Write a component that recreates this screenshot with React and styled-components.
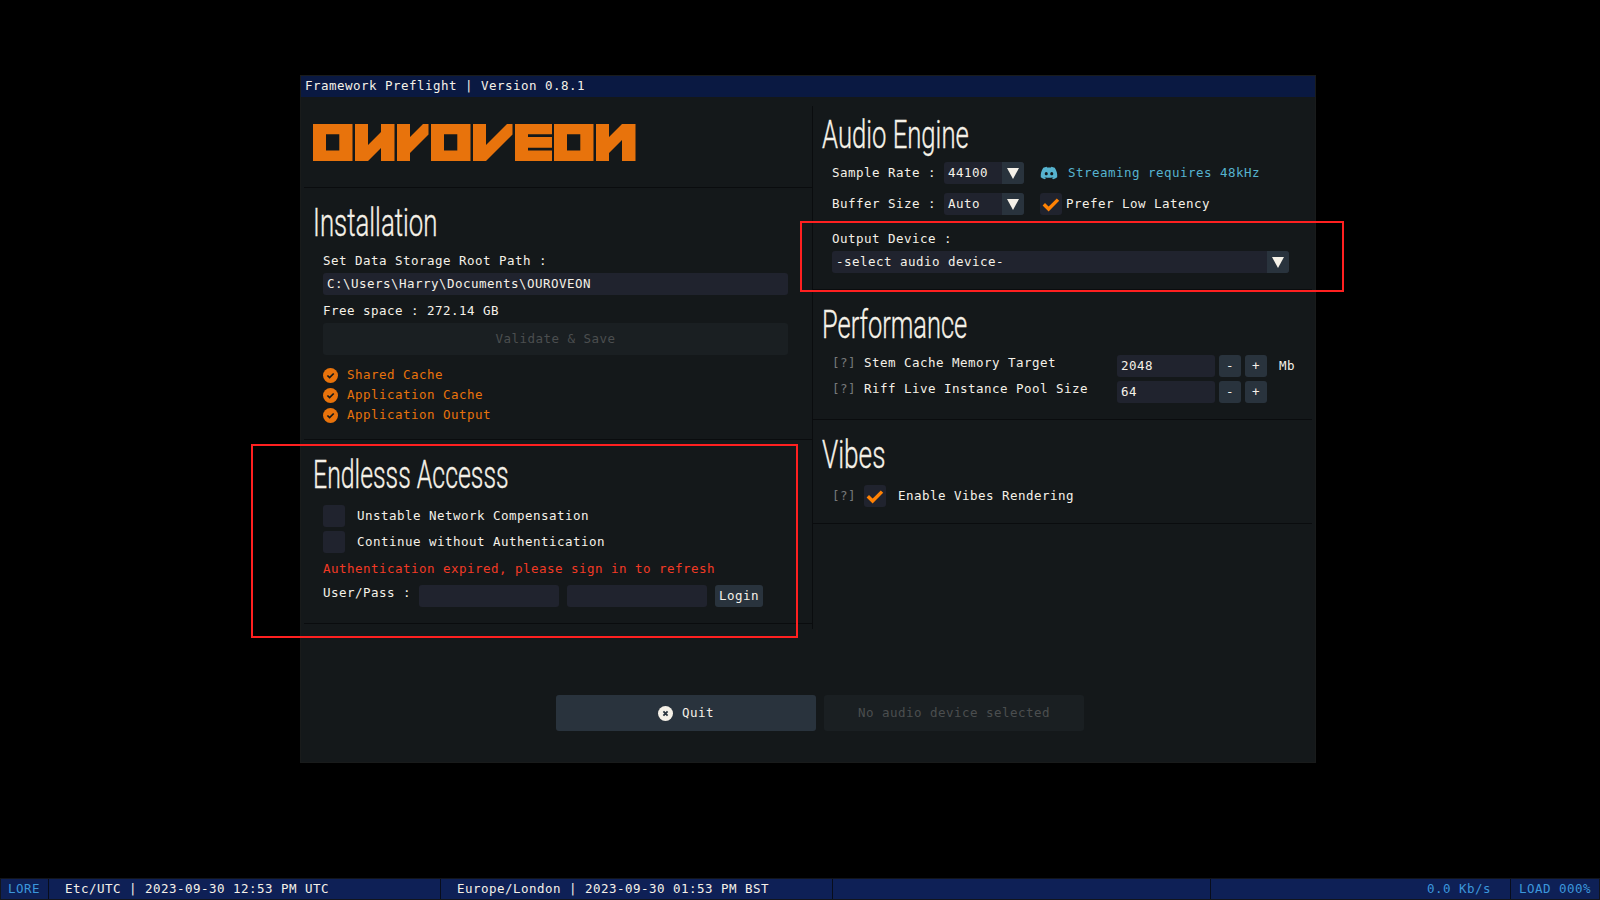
import React from "react";
import styled, { createGlobalStyle } from "styled-components";
import { FaDiscord } from "react-icons/fa";

const c = {
  panel: "#14181a",
  line: "#0a0c0e",
  title: "#0a1942",
  field: "#20232e",
  button: "#29333d",
  buttonOff: "#1a1f22",
  text: "#f5f1e8",
  dim: "#4b4e4f",
  hint: "#77787a",
  orange: "#e8730c",
  tick: "#ff8204",
  cyan: "#56b3cf",
  red: "#f23a25",
  blue: "#3c97dc",
};

const GlobalStyle = createGlobalStyle`
  * { box-sizing: border-box; }
  body { margin: 0; background: #000; overflow: hidden; }
`;

const Page = styled.div`
  position: relative;
  display: flex;
  flex-direction: column;
  width: 1600px;
  height: 900px;
  background: #000;
  color: ${c.text};
  font-family: "DejaVu Sans Mono", "Liberation Mono", monospace;
  font-size: 12.5px;
  letter-spacing: 0.475px;
  white-space: pre;
`;

const Panel = styled.main`
  display: flex;
  flex-direction: column;
  width: 1016px;
  height: 688px;
  margin: 75px 0 0 300px;
  background: ${c.panel};
  border: 1px solid #191b1b;
`;

const TitleBar = styled.header`
  height: 21px;
  padding-left: 4px;
  line-height: 20px;
  background: ${c.title};
`;

const Columns = styled.div`
  display: flex;
  height: 523px;
  margin: 9px 3px 0;
`;

const LeftColumn = styled.div`
  width: 509px;
  border-right: 1px solid ${c.line};
`;

const RightColumn = styled.div`
  width: 499px;
`;

const Section = styled.section`
  height: ${(p) => p.$height}px;
  padding: ${(p) => p.$top ?? 15}px 0 0 ${(p) => p.$left ?? 19}px;
  border-bottom: 1px solid ${c.line};
`;

const Heading = styled.h1`
  width: max-content;
  height: 40px;
  margin: 0 0 ${(p) => p.$gap ?? 10}px -10px;
  font: 300 39px/40px Roboto, sans-serif;
  letter-spacing: 0;
  -webkit-text-stroke: 0.35px ${c.text};
  transform: scaleX(${(p) => p.$squeeze});
  transform-origin: left center;
`;

const Line = styled.div`
  height: 20px;
  line-height: 20px;
  color: ${(p) => p.$color ?? "inherit"};
  margin-top: ${(p) => p.$gap ?? 0}px;
`;

const Row = styled.div`
  display: flex;
  align-items: center;
  height: 22px;
  line-height: 22px;
  margin-top: ${(p) => p.$gap ?? 0}px;
`;

const Label = styled.span`
  width: ${(p) => (p.$width ? `${p.$width}px` : "auto")};
  height: 22px;
  line-height: ${(p) => (p.$raised ? 22 - 2 * p.$raised : 22)}px;
  color: ${(p) => p.$color ?? "inherit"};
  margin-left: ${(p) => p.$indent ?? 0}px;
`;

const Field = styled.div`
  width: ${(p) => p.$width}px;
  height: 22px;
  margin: ${(p) => p.$gap ?? 0}px ${(p) => p.$after ?? 0}px 0 0;
  padding-left: 4px;
  line-height: 22px;
  background: ${c.field};
  border-radius: 3px;
`;

const ComboBox = styled.div`
  display: flex;
  justify-content: space-between;
  width: ${(p) => p.$width}px;
  height: 22px;
  margin-top: ${(p) => p.$gap ?? 0}px;
  padding-left: 4px;
  line-height: 22px;
  background: ${c.field};
  border-radius: 3px;
  overflow: hidden;
`;

const ComboArrow = styled.span`
  display: flex;
  align-items: center;
  justify-content: center;
  width: 22px;
  background: ${c.button};
`;

const Button = styled.button`
  display: flex;
  align-items: center;
  justify-content: center;
  width: ${(p) => p.$width}px;
  height: ${(p) => p.$height ?? 22}px;
  margin: ${(p) => p.$gap ?? 0}px ${(p) => p.$after ?? 0}px 0 0;
  padding: 0 0 ${(p) => (p.$height ? 2 : 0)}px;
  border: 0;
  border-radius: 3px;
  font: inherit;
  letter-spacing: inherit;
  color: ${(p) => (p.disabled ? c.dim : c.text)};
  background: ${(p) => (p.disabled ? c.buttonOff : c.button)};
`;

const CheckSquare = styled.span`
  display: flex;
  align-items: center;
  justify-content: center;
  width: 22px;
  height: 22px;
  background: ${c.field};
  border-radius: 3px;
`;

const StatusLine = styled.div`
  display: flex;
  align-items: center;
  gap: 9px;
  height: 20px;
  color: ${c.orange};
`;

const Streaming = styled.span`
  display: flex;
  align-items: center;
  gap: 10px;
  margin-left: 16px;
  color: ${c.cyan};
`;

const Actions = styled.div`
  display: flex;
  gap: 8px;
  margin: 66px 0 0 255px;
`;

const Footer = styled.footer`
  display: flex;
  height: 22px;
  margin-top: auto;
  line-height: 20px;
  background: #0e2056;
  border: 1px solid #12151c;
`;

const Cell = styled.div`
  width: ${(p) => p.$width}px;
  padding: 0 ${(p) => p.$right ?? 0}px 0 ${(p) => p.$left ?? 0}px;
  text-align: ${(p) => p.$align ?? "left"};
  color: ${(p) => p.$color ?? "inherit"};
  border-right: ${(p) => (p.$last ? "0" : `1px solid #080d1c`)};
`;

const Callout = styled.div`
  position: absolute;
  left: ${(p) => p.$x}px;
  top: ${(p) => p.$y}px;
  width: ${(p) => p.$w}px;
  height: ${(p) => p.$h}px;
  border: 2px solid #ff2020;
  pointer-events: none;
`;

const LogoMark = styled.svg`
  display: block;
`;

const CloseMark = styled.svg`
  margin: 2px 9px 0 0;
`;

const Logo = () => (
  <LogoMark width="323" height="37" viewBox="0 0 323 37" fill={c.orange} fillRule="evenodd">
    <path d="M0 0H39.5V37H0ZM13 10.3V26.5H26.3V10.3Z" />
    <path d="M42 0H55V21L68 8V0H81.5V37H68V24L55 37H42Z" />
    <path d="M84 0H97V13L110 0H115.5V10.5L97 29V37H84Z" />
    <path d="M118 0H157.5V37H118ZM131 10.3V26.5H144.3V10.3Z" />
    <path d="M160 0H173V21L194 0H199.5V10.5L173 37H160Z" />
    <path d="M202 0H239V10.3H215V13H239V23.7H215V26.5H239V37H202Z" />
    <path d="M241 0H280.5V37H241ZM254 10.3V26.5H267.3V10.3Z" />
    <path d="M283 0H296V13L309 0H322.5V37H309V16L296 29V37H283Z" />
  </LogoMark>
);

const Tick = () => (
  <svg width="22" height="22" viewBox="0 0 22 22" fill="none" stroke={c.tick} strokeWidth="3.4">
    <path d="M3.8 11.2L8.6 16L18 6.6" />
  </svg>
);

const Triangle = () => (
  <svg width="12" height="11" viewBox="0 0 12 11" fill={c.text}>
    <path d="M0 0H12L6 11Z" />
  </svg>
);

const DoneIcon = () => (
  <svg width="15" height="15" viewBox="0 0 15 15">
    <circle cx="7.5" cy="7.5" r="7.5" fill={c.orange} />
    <path d="M4.4 7.5L6.6 9.6L10.7 5.5" fill="none" stroke={c.panel} strokeWidth="1.7" />
  </svg>
);

const CloseIcon = () => (
  <CloseMark width="15" height="15" viewBox="0 0 15 15">
    <circle cx="7.5" cy="7.5" r="7.5" fill={c.text} />
    <path d="M5.4 5.4L9.6 9.6M9.6 5.4L5.4 9.6" fill="none" stroke={c.button} strokeWidth="1.8" />
  </CloseMark>
);

const Combo = ({ children, ...rest }) => (
  <ComboBox {...rest}>
    {children}
    <ComboArrow>
      <Triangle />
    </ComboArrow>
  </ComboBox>
);

const Stepper = ({ label, value, unit, gap }) => (
  <Row $gap={gap}>
    <Label $width={32} $raised={3} $color={c.hint}>[?]</Label>
    <Label $width={253} $raised={3}>{label}</Label>
    <Field $width={98} $after={4}>{value}</Field>
    <Button $width={22} $after={4}>-</Button>
    <Button $width={22}>+</Button>
    {unit && <Label $indent={12}>{unit}</Label>}
  </Row>
);

export default function App() {
  return (
    <Page>
      <GlobalStyle />
      <Panel>
        <TitleBar>Framework Preflight | Version 0.8.1</TitleBar>
        <Columns>
          <LeftColumn>
            <Section $height={82} $top={18} $left={9}>
              <Logo />
            </Section>
            <Section $height={252}>
              <Heading $squeeze={0.662} $gap={8}>Installation</Heading>
              <Line>Set Data Storage Root Path :</Line>
              <Field $width={465} $gap={2}>C:\Users\Harry\Documents\OUROVEON</Field>
              <Line $gap={6}>Free space : 272.14 GB</Line>
              <Button disabled $width={465} $height={32} $gap={2}>Validate &amp; Save</Button>
              <Line $gap={10}>
                {["Shared Cache", "Application Cache", "Application Output"].map((name) => (
                  <StatusLine key={name}>
                    <DoneIcon />
                    {name}
                  </StatusLine>
                ))}
              </Line>
            </Section>
            <Section $height={184}>
              <Heading $squeeze={0.637}>Endlesss Accesss</Heading>
              <Row>
                <CheckSquare />
                <Label $indent={12}>Unstable Network Compensation</Label>
              </Row>
              <Row $gap={4}>
                <CheckSquare />
                <Label $indent={12}>Continue without Authentication</Label>
              </Row>
              <Line $gap={6} $color={c.red}>Authentication expired, please sign in to refresh</Line>
              <Row $gap={6}>
                <Label $width={96} $raised={3}>User/Pass :</Label>
                <Field $width={140} $after={8} />
                <Field $width={140} $after={8} />
                <Button $width={48}>Login</Button>
              </Row>
            </Section>
          </LeftColumn>
          <RightColumn>
            <Section $height={184} $top={9}>
              <Heading $squeeze={0.658} $gap={7}>Audio Engine</Heading>
              <Row>
                <Label $width={112}>Sample Rate :</Label>
                <Combo $width={80}>44100</Combo>
                <Streaming>
                  <FaDiscord size={18} />
                  Streaming requires 48kHz
                </Streaming>
              </Row>
              <Row $gap={9}>
                <Label $width={112}>Buffer Size :</Label>
                <Combo $width={80}>Auto</Combo>
                <Label $indent={16}>
                  <CheckSquare>
                    <Tick />
                  </CheckSquare>
                </Label>
                <Label $indent={4}>Prefer Low Latency</Label>
              </Row>
              <Line $gap={14}>Output Device :</Line>
              <Combo $width={457} $gap={2}>-select audio device-</Combo>
            </Section>
            <Section $height={130}>
              <Heading $squeeze={0.653}>Performance</Heading>
              <Stepper label="Stem Cache Memory Target" value="2048" unit="Mb" />
              <Stepper label="Riff Live Instance Pool Size" value="64" gap={4} />
            </Section>
            <Section $height={104}>
              <Heading $squeeze={0.672}>Vibes</Heading>
              <Row>
                <Label $width={32} $color={c.hint}>[?]</Label>
                <CheckSquare>
                  <Tick />
                </CheckSquare>
                <Label $indent={12}>Enable Vibes Rendering</Label>
              </Row>
            </Section>
          </RightColumn>
        </Columns>
        <Actions>
          <Button $width={260} $height={36}>
            <CloseIcon />
            Quit
          </Button>
          <Button disabled $width={260} $height={36}>No audio device selected</Button>
        </Actions>
      </Panel>
      <Footer>
        <Cell $width={48} $left={7} $color={c.blue}>LORE</Cell>
        <Cell $width={392} $left={16}>Etc/UTC | 2023-09-30 12:53 PM UTC</Cell>
        <Cell $width={392} $left={16}>Europe/London | 2023-09-30 01:53 PM BST</Cell>
        <Cell $width={378} />
        <Cell $width={300} $align="right" $right={19} $color={c.blue}>0.0 Kb/s</Cell>
        <Cell $width={88} $left={8} $color={c.blue} $last>LOAD 000%</Cell>
      </Footer>
      <Callout $x={251} $y={444} $w={547} $h={194} />
      <Callout $x={800} $y={221} $w={544} $h={71} />
    </Page>
  );
}
